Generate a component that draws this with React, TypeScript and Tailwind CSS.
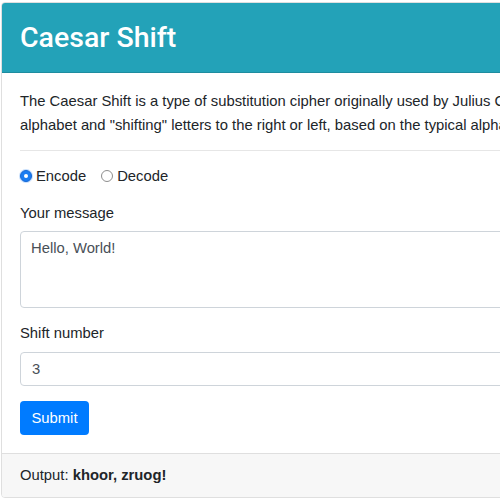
import React from "react";

export default function App() {
  return (
    <div
      className="w-[500px] h-[500px] overflow-hidden bg-white pl-px pt-[2px] text-[#212529]"
      style={{ fontFamily: '"Liberation Sans", Arial, sans-serif' }}
    >
      <div className="w-[820px] border border-[#dfdfdf] rounded-[4px] overflow-hidden">
        <div className="h-[70px] bg-[#23a2b8] border-b border-[#1e8c9f] px-[18px] flex items-center">
          <h3
            className="text-[28.5px] font-medium text-white leading-none mt-[2px]"
            style={{ fontFamily: 'Roboto, "Liberation Sans", Arial, sans-serif' }}
          >
            Caesar Shift
          </h3>
        </div>
        <div className="px-[18px] pb-[18px] text-[14.8px]">
          <p className="mt-[16px] leading-6">
            <span className="block whitespace-nowrap">
              The Caesar Shift is a type of substitution cipher originally used by Julius Caesar. It involves taking the
            </span>
            <span className="block whitespace-nowrap">
              alphabet and "shifting" letters to the right or left, based on the typical alphabetical order of the letters.
            </span>
          </p>
          <div className="mt-[13px] border-t border-[#e6e6e6]" />
          <div className="mt-[13px] h-6 flex items-center">
            <span className="w-[12px] h-[12px] rounded-full bg-[#1a7cf2] border border-[#1669d6] flex items-center justify-center shadow-[0_0_0_1px_rgba(26,124,242,0.25)]">
              <span className="w-[4px] h-[4px] rounded-full bg-white" />
            </span>
            <span className="ml-[4px]">Encode</span>
            <span className="ml-[15px] w-[12px] h-[12px] rounded-full bg-white border border-[#8e8e8e]" />
            <span className="ml-[4px]">Decode</span>
          </div>
          <div className="mt-[13px] h-6 leading-6">Your message</div>
          <textarea
            className="mt-[6px] block w-full h-[77px] resize-none border border-[#ced4da] rounded-[4px] px-[10px] pt-[4px] text-[14.8px] leading-6 text-[#495057] outline-none"
            defaultValue="Hello, World!"
          />
          <div className="mt-[13px] h-6 leading-6">Shift number</div>
          <input
            className="mt-[7px] block w-full h-[34px] border border-[#ced4da] rounded-[4px] px-[11px] text-[14.8px] text-[#495057] outline-none"
            defaultValue="3"
          />
          <button className="mt-[15px] h-[34px] w-[69px] rounded-[4px] bg-[#007bff] text-white text-[14.8px] flex items-center justify-center">
            Submit
          </button>
        </div>
        <div className="h-[44px] bg-[#f7f7f7] border-t border-[#dfdfdf] px-[18px] flex items-center text-[14.8px]">
          <span>Output:&nbsp;</span>
          <span className="font-bold">khoor, zruog!</span>
        </div>
      </div>
    </div>
  );
}
